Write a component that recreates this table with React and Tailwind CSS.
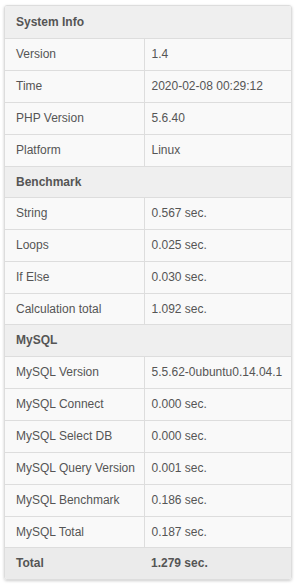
import { Fragment } from "react";

const SECTIONS = [
  {
    title: "System Info",
    rows: [
      ["Version", "1.4"],
      ["Time", "2020-02-08 00:29:12"],
      ["PHP Version", "5.6.40"],
      ["Platform", "Linux"],
    ],
  },
  {
    title: "Benchmark",
    short: true,
    rows: [
      ["String", "0.567 sec."],
      ["Loops", "0.025 sec."],
      ["If Else", "0.030 sec."],
      ["Calculation total", "1.092 sec.", true],
    ],
  },
  {
    title: "MySQL",
    rows: [
      ["MySQL Version", "5.5.62-0ubuntu0.14.04.1"],
      ["MySQL Connect", "0.000 sec."],
      ["MySQL Select DB", "0.000 sec."],
      ["MySQL Query Version", "0.001 sec."],
      ["MySQL Benchmark", "0.186 sec."],
      ["MySQL Total", "0.187 sec.", true],
    ],
  },
];

export default function App() {
  return (
    <div className="w-[296px] h-[584px] bg-white pt-[5px] pl-[4px] font-['Liberation_Sans',Arial,sans-serif] text-[12px] text-[#555]">
      <div className="w-[288px] border border-[#ddd] rounded-[3px] overflow-hidden shadow-[0_1px_3px_rgba(0,0,0,0.2)]">
        <table className="w-full border-collapse table-fixed">
          <colgroup>
            <col className="w-[139px]" />
            <col />
          </colgroup>
          <tbody>
            {SECTIONS.map((section) => (
              <Fragment key={section.title}>
                <tr className={`bg-[#efefef] ${section.short ? "h-[31px]" : "h-[32px]"}`}>
                  <th colSpan={2} className="p-0 px-[11px] text-left font-bold border-b border-[#ddd]">
                    {section.title}
                  </th>
                </tr>
                {section.rows.map(([label, value, short]) => (
                  <tr key={label} className={`bg-[#f9f9f9] ${short ? "h-[31px]" : "h-[32px]"}`}>
                    <td className="p-0 px-[11px] whitespace-nowrap border-b border-r border-[#ddd]">{label}</td>
                    <td className="p-0 px-[7px] whitespace-nowrap border-b border-[#ddd]">{value}</td>
                  </tr>
                ))}
              </Fragment>
            ))}
            <tr className="h-[32px] bg-[#ebebeb] font-bold">
              <td className="px-[11px]">Total</td>
              <td className="px-[7px]">1.279 sec.</td>
            </tr>
          </tbody>
        </table>
      </div>
    </div>
  );
}
